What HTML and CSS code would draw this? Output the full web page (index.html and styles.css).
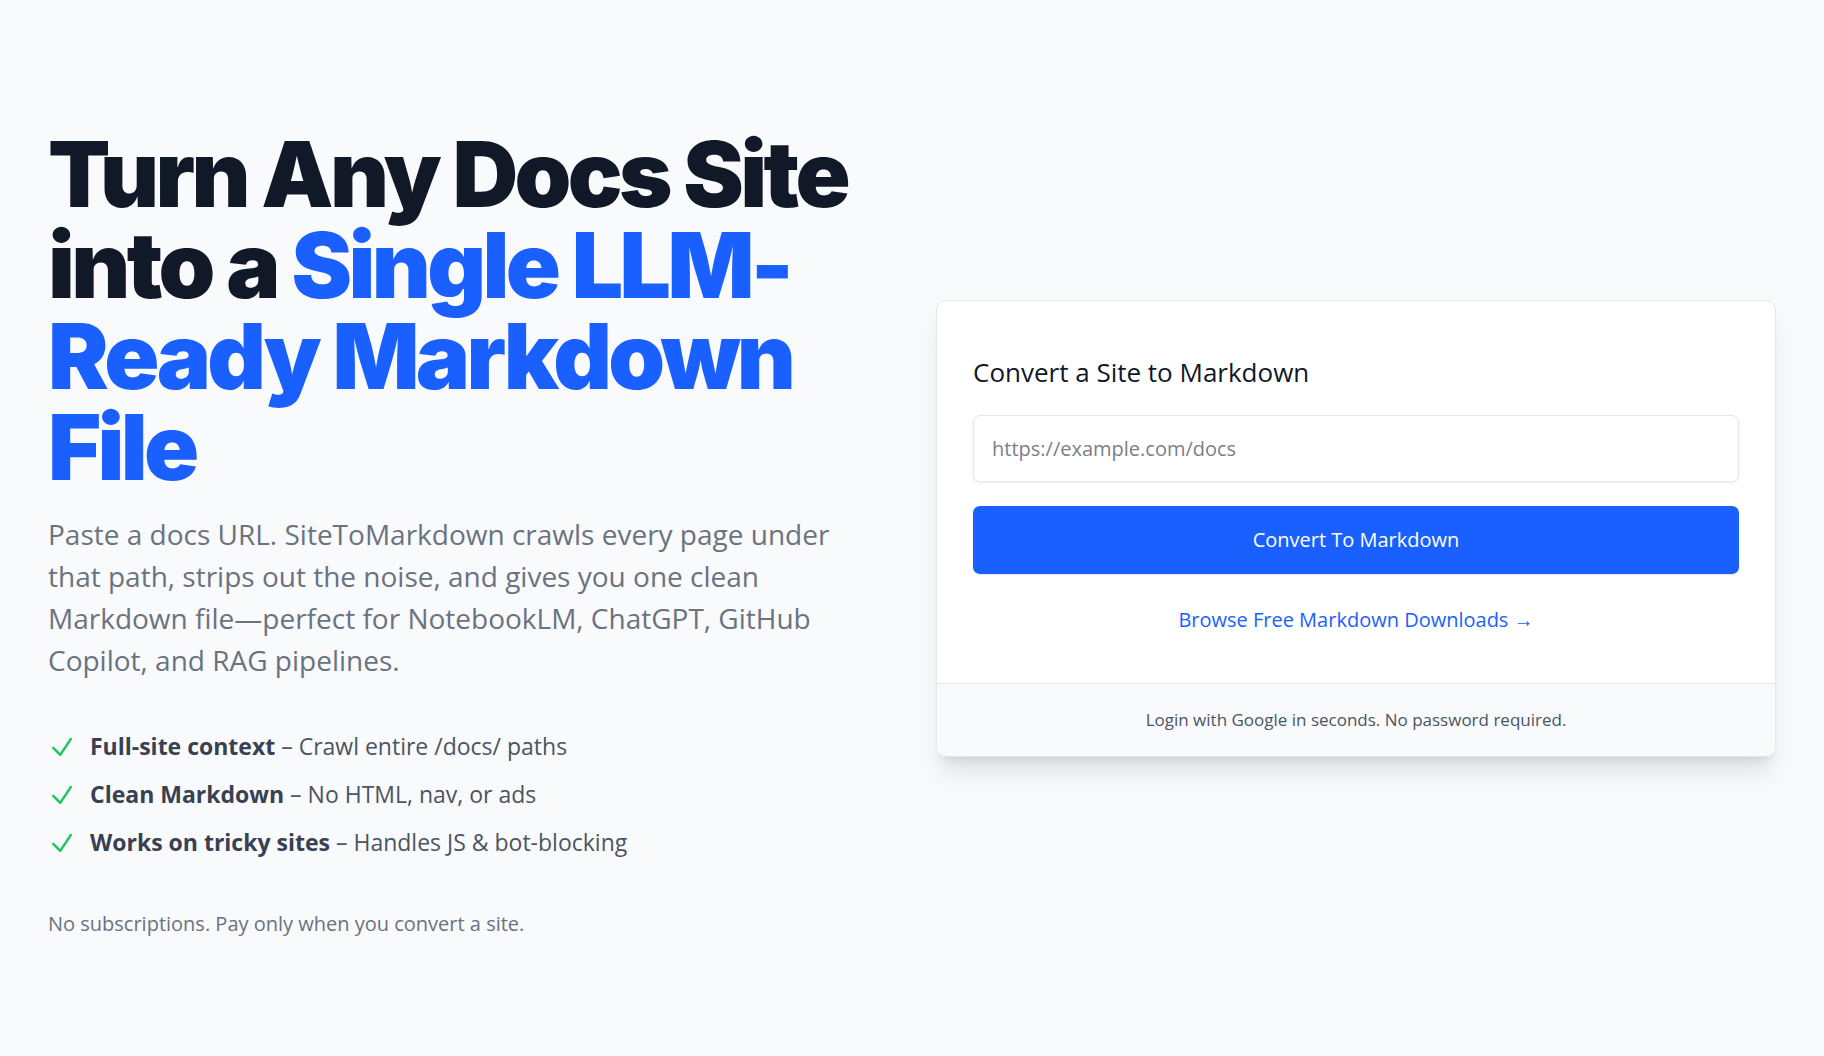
FILE: index.html
```html
<!DOCTYPE html>
<html lang="en">
<head>
<meta charset="utf-8">
<title>SiteToMarkdown</title>
<link rel="stylesheet" href="styles.css">
</head>
<body>
<main class="page">
  <section class="hero">
    <div class="intro">
      <h1 class="title">Turn Any Docs Site into a <span class="accent">Single LLM-Ready Markdown File</span></h1>
      <p class="lead">Paste a docs URL. SiteToMarkdown crawls every page under that path, strips out the noise, and gives you one clean Markdown file—perfect for NotebookLM, ChatGPT, GitHub Copilot, and RAG pipelines.</p>
      <ul class="features">
        <li class="feature">
          <svg class="check" viewBox="0 0 24 24" fill="none" stroke="currentColor" stroke-width="2.2" stroke-linecap="round" stroke-linejoin="round"><path d="M4.5 12.75l6 6 9-13.5"/></svg>
          <span><strong>Full-site context</strong> – Crawl entire /docs/ paths</span>
        </li>
        <li class="feature">
          <svg class="check" viewBox="0 0 24 24" fill="none" stroke="currentColor" stroke-width="2.2" stroke-linecap="round" stroke-linejoin="round"><path d="M4.5 12.75l6 6 9-13.5"/></svg>
          <span><strong>Clean Markdown</strong> – No HTML, nav, or ads</span>
        </li>
        <li class="feature">
          <svg class="check" viewBox="0 0 24 24" fill="none" stroke="currentColor" stroke-width="2.2" stroke-linecap="round" stroke-linejoin="round"><path d="M4.5 12.75l6 6 9-13.5"/></svg>
          <span><strong>Works on tricky sites</strong> – Handles JS &amp; bot-blocking</span>
        </li>
      </ul>
      <p class="note">No subscriptions. Pay only when you convert a site.</p>
    </div>
    <div class="card">
      <div class="card-body">
        <h2 class="card-title">Convert a Site to Markdown</h2>
        <input class="url-input" type="text" placeholder="https://example.com/docs">
        <button class="convert-btn" type="button">Convert To Markdown</button>
        <a class="browse-link" href="#">Browse Free Markdown Downloads →</a>
      </div>
      <div class="card-footer">Login with Google in seconds. No password required.</div>
    </div>
  </section>
</main>
</body>
</html>
```

FILE: styles.css
```css
* { box-sizing: border-box; }

html, body {
  margin: 0;
  padding: 0;
  background: #f9fafb;
}

body {
  font-family: "Open Sans", "Noto Sans", sans-serif;
  color: #111827;
}

.page {
  min-height: 1056px;
  display: flex;
  align-items: center;
  padding: 0 48px;
}

.hero {
  width: 100%;
  display: grid;
  grid-template-columns: 1fr 1fr;
  gap: 48px;
  align-items: center;
}

.intro {
  padding-top: 12px;
}

.title {
  margin: 0;
  font-family: Inter, "Open Sans", sans-serif;
  font-size: 91px;
  line-height: 91px;
  font-weight: 900;
  letter-spacing: -0.04em;
  color: #111827;
}

.accent { color: #1a5fff; }

.lead {
  margin: 20px 0 0;
  font-size: 28px;
  line-height: 42px;
  color: #6b7280;
}

.features {
  list-style: none;
  margin: 49px 0 0;
  padding: 0;
  display: flex;
  flex-direction: column;
  gap: 15px;
}

.feature {
  display: flex;
  align-items: center;
  gap: 14px;
  font-size: 23px;
  line-height: 33px;
  color: #4b5563;
}

.feature strong {
  font-weight: 700;
  color: #374151;
}

.check {
  width: 28px;
  height: 28px;
  color: #22c55e;
  flex: none;
}

.note {
  margin: 50px 0 0;
  font-size: 20px;
  line-height: 30px;
  color: #6b7280;
}

.card {
  background: #ffffff;
  border: 1px solid #e5e7eb;
  border-radius: 10px;
  overflow: hidden;
  box-shadow: 0 20px 25px -5px rgba(0, 0, 0, 0.1), 0 8px 10px -6px rgba(0, 0, 0, 0.1);
}

.card-body {
  padding: 50px 36px 48px;
  display: flex;
  flex-direction: column;
}

.card-title {
  margin: 0 0 22px;
  font-size: 26px;
  line-height: 42px;
  font-weight: 400;
  color: #111827;
}

.url-input {
  height: 67px;
  padding: 0 18px;
  border: 1px solid #e5e7eb;
  border-radius: 7px;
  background: #fff;
  font-family: inherit;
  font-size: 20px;
  color: #111827;
  box-shadow: 0 1px 3px rgba(0, 0, 0, 0.08);
}

.url-input::placeholder { color: #7b8089; }

.convert-btn {
  margin-top: 24px;
  height: 68px;
  border: none;
  border-radius: 7px;
  background: #1a5fff;
  color: #fff;
  font-family: inherit;
  font-size: 20px;
  box-shadow: 0 1px 2px rgba(0, 0, 0, 0.1);
}

.browse-link {
  margin-top: 31px;
  text-align: center;
  font-size: 20px;
  line-height: 30px;
  color: #1a5fff;
  text-decoration: none;
}

.card-footer {
  height: 73px;
  display: flex;
  align-items: center;
  justify-content: center;
  background: #f9fafb;
  border-top: 1px solid #e5e7eb;
  font-size: 17px;
  color: #4b5563;
}
```
